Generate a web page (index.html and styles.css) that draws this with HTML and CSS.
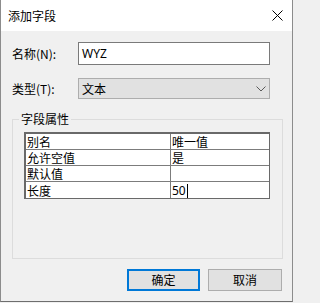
FILE: index.html
```html
<!DOCTYPE html>
<html lang="zh-CN">
<head>
<meta charset="utf-8">
<title>添加字段</title>
<link rel="stylesheet" href="styles.css">
</head>
<body>
<div class="window">
  <div class="titlebar">
    <span class="title">添加字段</span>
    <svg class="close" width="11" height="11" viewBox="0 0 11 11"><path d="M0.5 0.5 L10.5 10.5 M10.5 0.5 L0.5 10.5" stroke="#000" stroke-width="1" fill="none"/></svg>
  </div>
  <div class="content">
    <div class="field-row">
      <label class="label">名称(N):</label>
      <div class="textbox">WYZ</div>
    </div>
    <div class="field-row type-row">
      <label class="label">类型(T):</label>
      <div class="combo">
        <span class="combo-text">文本</span>
        <svg class="chevron" width="10" height="6" viewBox="0 0 10 6"><path d="M0.5 0.5 L5 5 L9.5 0.5" stroke="#5a5a5a" stroke-width="1" fill="none"/></svg>
      </div>
    </div>
    <div class="group">
      <span class="group-title">字段属性</span>
      <table class="props">
        <tr><td class="key">别名</td><td class="val">唯一值</td></tr>
        <tr><td class="key">允许空值</td><td class="val">是</td></tr>
        <tr><td class="key">默认值</td><td class="val"></td></tr>
        <tr class="last"><td class="key">长度</td><td class="val"><span class="num">50</span><span class="caret"></span></td></tr>
      </table>
    </div>
    <div class="buttons">
      <button class="btn primary">确定</button>
      <button class="btn">取消</button>
    </div>
  </div>
</div>
</body>
</html>
```
FILE: styles.css
```css
html, body {
  margin: 0;
  padding: 0;
  background: #f0f0f0;
}
body {
  font-family: "Noto Sans CJK SC", "Noto Sans", sans-serif;
  font-size: 12px;
  color: #000;
}
.window {
  box-sizing: border-box;
  width: 293px;
  height: 302px;
  background: #f0f0f0;
  border-left: 1px solid #8c8c8c;
  border-right: 1px solid #8c8c8c;
  border-bottom: 1px solid #6e6e6e;
}
.titlebar {
  height: 31px;
  background: #fff;
  display: flex;
  align-items: center;
  justify-content: space-between;
  padding: 0 9px 0 7px;
}
.title {
  font-size: 12px;
  line-height: 16px;
  color: #000;
}
.close {
  display: block;
}
.content {
  padding: 11px 9px 0 11px;
}
.field-row {
  display: flex;
  align-items: center;
}
.type-row {
  margin-top: 13px;
}
.label {
  width: 66px;
  line-height: 16px;
  white-space: nowrap;
}
.textbox {
  box-sizing: border-box;
  width: 192px;
  height: 23px;
  background: #fff;
  border: 1px solid #7a7a7a;
  padding: 0 0 0 3px;
  font-family: "Noto Sans", "Liberation Sans", sans-serif;
  font-size: 12px;
  line-height: 21px;
}
.combo {
  box-sizing: border-box;
  width: 192px;
  height: 21px;
  background: #e1e1e1;
  border: 1px solid #adadad;
  display: flex;
  align-items: center;
  justify-content: space-between;
  padding: 0 3px 0 3px;
}
.combo-text {
  line-height: 16px;
}
.chevron {
  display: block;
}
.group {
  position: relative;
  box-sizing: border-box;
  width: 271px;
  height: 140px;
  margin-top: 20px;
  border: 1px solid #dcdcdc;
  padding: 12px 0 0 11px;
}
.group-title {
  position: absolute;
  top: -9px;
  left: 6px;
  padding: 0 2px;
  background: #f0f0f0;
  line-height: 16px;
  font-size: 12px;
}
.props {
  border-collapse: separate;
  border-spacing: 0;
  width: 246px;
  border-top: 2px solid #696969;
  border-left: 2px solid #696969;
  border-right: 1px solid #696969;
  border-bottom: 1px solid #696969;
  background: #fff;
  font-size: 12px;
}
.props td {
  height: 15px;
  padding: 0 0 0 1px;
  line-height: 15px;
  border-bottom: 1px solid #7c7c7c;
  vertical-align: middle;
  white-space: nowrap;
}
.props tr.last td {
  border-bottom: none;
}
.props td.key {
  width: 145px;
  border-right: 1px solid #7c7c7c;
  box-sizing: border-box;
}
.num {
  font-family: "Noto Sans", "Liberation Sans", sans-serif;
  font-size: 12px;
}
.caret {
  display: inline-block;
  width: 1px;
  height: 14px;
  background: #000;
  vertical-align: -3px;
  margin-left: 1px;
}
.buttons {
  display: flex;
  justify-content: flex-end;
  gap: 8px;
  margin-top: 10px;
  padding-right: 1px;
}
.btn {
  box-sizing: border-box;
  height: 22px;
  width: 74px;
  margin: 0;
  padding: 0;
  background: #e1e1e1;
  border: 1px solid #adadad;
  font-family: "Noto Sans CJK SC", "Noto Sans", sans-serif;
  font-size: 12px;
  line-height: 18px;
  color: #000;
}
.btn.primary {
  width: 73px;
  border: 2px solid #0078d7;
}
```
